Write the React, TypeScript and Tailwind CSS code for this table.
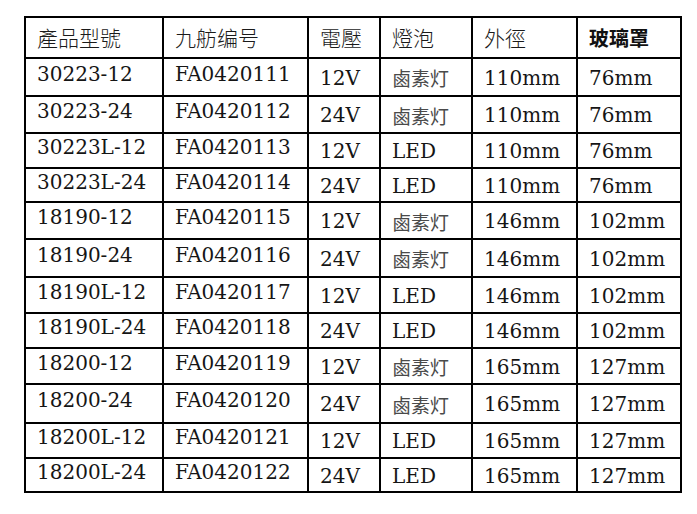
const rows = [
  { h: "h-[36px]", model: "30223-12", code: "FA0420111", volt: "12V", bulb: "鹵素灯", outer: "110mm", glass: "76mm" },
  { h: "h-[35px]", model: "30223-24", code: "FA0420112", volt: "24V", bulb: "鹵素灯", outer: "110mm", glass: "76mm" },
  { h: "h-[33px]", model: "30223L-12", code: "FA0420113", volt: "12V", bulb: "LED", outer: "110mm", glass: "76mm" },
  { h: "h-[32px]", model: "30223L-24", code: "FA0420114", volt: "24V", bulb: "LED", outer: "110mm", glass: "76mm" },
  { h: "h-[35px]", model: "18190-12", code: "FA0420115", volt: "12V", bulb: "鹵素灯", outer: "146mm", glass: "102mm" },
  { h: "h-[36px]", model: "18190-24", code: "FA0420116", volt: "24V", bulb: "鹵素灯", outer: "146mm", glass: "102mm" },
  { h: "h-[34px]", model: "18190L-12", code: "FA0420117", volt: "12V", bulb: "LED", outer: "146mm", glass: "102mm" },
  { h: "h-[33px]", model: "18190L-24", code: "FA0420118", volt: "24V", bulb: "LED", outer: "146mm", glass: "102mm" },
  { h: "h-[34px]", model: "18200-12", code: "FA0420119", volt: "12V", bulb: "鹵素灯", outer: "165mm", glass: "127mm" },
  { h: "h-[37px]", model: "18200-24", code: "FA0420120", volt: "24V", bulb: "鹵素灯", outer: "165mm", glass: "127mm" },
  { h: "h-[33px]", model: "18200L-12", code: "FA0420121", volt: "12V", bulb: "LED", outer: "165mm", glass: "127mm" },
  { h: "h-[32px]", model: "18200L-24", code: "FA0420122", volt: "24V", bulb: "LED", outer: "165mm", glass: "127mm" },
]

const cols = "grid grid-cols-[136px_143px_70px_90px_103px_102px] gap-[2px]"
const serif = "font-['DejaVu_Serif',serif] text-[20px] leading-none text-[#151515]"
const cjk = "font-['Noto_Sans_CJK_TC','Noto_Sans_CJK_SC',sans-serif]"

function Cell({ children, className = "" }: { children: React.ReactNode; className?: string }) {
  return <div className={`bg-white flex items-center pl-[11px] ${className}`}>{children}</div>
}

export default function App() {
  return (
    <div className="w-[697px] h-[514px] bg-white">
      <div className="pt-[16px] pl-[24px]">
        <div className="inline-flex flex-col gap-[2px] bg-black p-[2px]">
          <div className={`${cols} h-[39px]`}>
            {["產品型號", "九舫编号", "電壓", "燈泡", "外徑"].map((t) => (
              <Cell key={t}>
                <span className={`${cjk} text-[21px] font-light leading-none text-[#1a1a1a]`}>{t}</span>
              </Cell>
            ))}
            <Cell>
              <span className={`${cjk} text-[20px] font-semibold leading-none text-[#111]`}>玻璃罩</span>
            </Cell>
          </div>
          {rows.map((r) => (
            <div key={r.model} className={`${cols} ${r.h}`}>
              <Cell className="pb-[7px]">
                <span className={serif}>{r.model}</span>
              </Cell>
              <Cell className="pb-[7px]">
                <span className={serif}>{r.code}</span>
              </Cell>
              <Cell className="pt-[1px]">
                <span className={serif}>{r.volt}</span>
              </Cell>
              <Cell className="pt-[1px]">
                {r.bulb === "LED" ? (
                  <span className={serif}>{r.bulb}</span>
                ) : (
                  <span className={`${cjk} text-[19px] leading-none text-[#4a4a4a]`}>{r.bulb}</span>
                )}
              </Cell>
              <Cell className="pt-[1px]">
                <span className={serif}>{r.outer}</span>
              </Cell>
              <Cell className="pt-[1px]">
                <span className={serif}>{r.glass}</span>
              </Cell>
            </div>
          ))}
        </div>
      </div>
    </div>
  )
}
